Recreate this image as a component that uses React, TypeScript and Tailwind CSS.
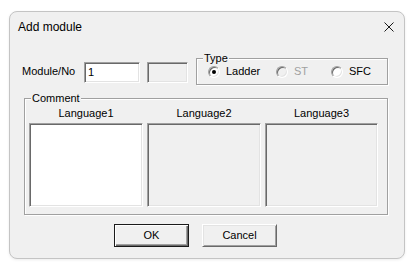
import React from "react";

const sunken =
  "border border-t-[#a0a0a0] border-l-[#a0a0a0] border-b-white border-r-white shadow-[inset_1px_1px_0_#696969,inset_-1px_-1px_0_#e3e3e3]";

const etched = "border border-[#a0a0a0] shadow-[inset_1px_1px_0_#fff,1px_1px_0_#fff]";

function Radio({ label, checked, disabled, width }: { label: string; checked?: boolean; disabled?: boolean; width: string }) {
  return (
    <div className={`flex items-center ${width}`}>
      <span
        className={`w-[12px] h-[12px] rounded-full border border-t-[#a0a0a0] border-l-[#a0a0a0] border-b-white border-r-white flex items-center justify-center shadow-[inset_1px_1px_0_#696969,inset_-1px_-1px_0_#e3e3e3] ${
          disabled ? "bg-[#f0f0f0]" : "bg-white"
        }`}
      >
        {checked && <span className="w-[4px] h-[4px] rounded-full bg-black" />}
      </span>
      <span className={`ml-[6px] leading-[13px] ${disabled ? "text-[#a0a0a0]" : "text-black"}`}>{label}</span>
    </div>
  );
}

function LangColumn({ name, enabled }: { name: string; enabled?: boolean }) {
  return (
    <div className="flex flex-col">
      <div className="h-[14px] leading-[14px] text-center">{name}</div>
      <div className={`mt-[3px] h-[84px] ${sunken} ${enabled ? "bg-white" : "bg-[#f0f0f0]"}`} />
    </div>
  );
}

export default function App() {
  return (
    <div className="w-[419px] h-[275px] bg-white pt-[11px] pl-[9px] font-['Liberation_Sans',Arial,sans-serif] text-[11px] text-black">
      <div className="w-[396px] h-[248px] rounded-[8px] border border-[#c4c4c4] bg-[#f0f0f0] shadow-[0_1px_3px_rgba(0,0,0,0.08)] flex flex-col">
        {/* Title */}
        <div className="h-[29px] flex items-center justify-between pl-[8px] pr-[9px]">
          <span className="text-[12px] leading-[14px]">Add module</span>
          <svg width="10" height="10" viewBox="0 0 10 10" className="text-[#1a1a1a] mr-[1px]">
            <path d="M0.5 0.5 L9.5 9.5 M9.5 0.5 L0.5 9.5" stroke="currentColor" strokeWidth="1" />
          </svg>
        </div>

        {/* Module / Type row */}
        <div className="mt-[17px] flex items-start pl-[12px]">
          <span className="w-[62px] h-[27px] leading-[27px]">Module/No</span>
          <div className={`mt-[4px] w-[56px] h-[21px] bg-white ${sunken} pl-[3px] leading-[19px]`}>1</div>
          <div className={`mt-[4px] ml-[7px] w-[41px] h-[21px] bg-[#f0f0f0] ${sunken}`} />
          <div className={`relative ml-[8px] w-[192px] h-[27px] ${etched} flex items-center pl-[11px]`}>
            <span className="absolute -top-[7px] left-[6px] bg-[#f0f0f0] px-[1px] leading-[13px]">Type</span>
            <Radio label="Ladder" checked width="w-[68px]" />
            <Radio label="ST" disabled width="w-[55px]" />
            <Radio label="SFC" width="w-[50px]" />
          </div>
        </div>

        {/* Comment group */}
        <div className={`relative mt-[13px] ml-[14px] w-[364px] ${etched} pt-[7px] pb-[7px] pl-[4px]`}>
          <span className="absolute -top-[7px] left-[6px] bg-[#f0f0f0] px-[1px] leading-[13px]">Comment</span>
          <div className="grid grid-cols-[114px_114px_113px] gap-x-[4px]">
            <LangColumn name="Language1" enabled />
            <LangColumn name="Language2" />
            <LangColumn name="Language3" />
          </div>
        </div>

        {/* Buttons */}
        <div className="mt-[9px] ml-[104px] flex gap-[13px]">
          <button
            type="button"
            className="w-[75px] h-[23px] bg-[#f0f0f0] border border-[#1a1a1a] shadow-[inset_1px_1px_0_#fff,inset_-1px_-1px_0_#696969,inset_-2px_-2px_0_#a0a0a0]"
          >
            OK
          </button>
          <button
            type="button"
            className="w-[75px] h-[23px] bg-[#f0f0f0] border border-t-white border-l-white border-b-[#696969] border-r-[#696969] shadow-[inset_1px_1px_0_#e3e3e3,inset_-1px_-1px_0_#a0a0a0]"
          >
            Cancel
          </button>
        </div>
      </div>
    </div>
  );
}
